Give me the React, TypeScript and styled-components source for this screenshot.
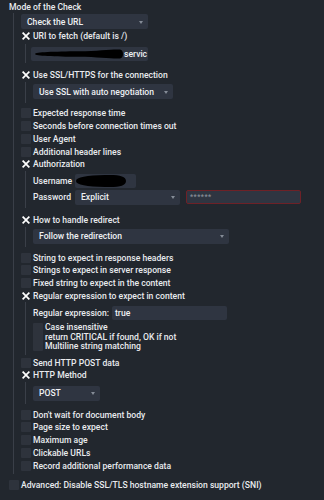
import React from "react";
import styled, { createGlobalStyle } from "styled-components";

const GlobalStyle = createGlobalStyle`
  html, body { margin: 0; padding: 0; background: #22272e; }
  body { font-family: Roboto, "Liberation Sans", sans-serif; }
`;

const Page = styled.div`
  width: 324px;
  height: 500px;
  background: #22272e;
  color: #e9ebee;
  font-size: 8.6px;
  font-weight: 500;
  overflow: hidden;
  box-sizing: border-box;
`;

const Header = styled.div`
  height: 13px;
  display: flex;
  align-items: center;
  padding-left: 9px;
  font-weight: 500;
`;

const Group = styled.div`
  margin-left: 13px;
  border-left: 1px solid #3a3f48;
  padding-left: 7px;
  padding-bottom: 1.6px;
  display: flex;
  flex-direction: column;
`;

const Nested = styled.div<{ $pt: number; $pb: number; $mt?: number; $gap?: number }>`
  margin-left: 4px;
  border-left: 1px solid #3a3f48;
  padding-left: 7px;
  padding-top: ${(p) => p.$pt}px;
  padding-bottom: ${(p) => p.$pb}px;
  margin-top: ${(p) => p.$mt ?? 0}px;
  display: flex;
  flex-direction: column;
  align-items: flex-start;
  gap: ${(p) => p.$gap ?? 0}px;
`;

const Row = styled.div<{ $mt?: number; $pl?: number }>`
  height: 12.75px;
  display: flex;
  align-items: center;
  gap: 2px;
  margin-top: ${(p) => p.$mt ?? 0}px;
  padding-left: ${(p) => p.$pl ?? 0}px;
  white-space: nowrap;
`;

const BoxEl = styled.span<{ $h?: number }>`
  width: 10px;
  height: ${(p) => p.$h ?? 10}px;
  flex: none;
  background: #2e333c;
  border-radius: 1px;
  display: flex;
  align-items: center;
  justify-content: center;
`;

const Check = ({ on, h }: { on?: boolean; h?: number }) => (
  <BoxEl $h={h} style={on ? { background: "transparent" } : undefined}>
    {on && (
      <svg width="8" height="8" viewBox="0 0 8 8">
        <path d="M1.2 1.2 L6.8 6.8 M6.8 1.2 L1.2 6.8" stroke="#ffffff" strokeWidth="1.7" strokeLinecap="square" />
      </svg>
    )}
  </BoxEl>
);

const SelectBox = styled.div<{ $w: number; $mt?: number }>`
  width: ${(p) => p.$w}px;
  height: 15px;
  margin-top: ${(p) => p.$mt ?? 0}px;
  flex: none;
  box-sizing: border-box;
  background: #2f3541;
  border-radius: 2px;
  display: flex;
  align-items: center;
  justify-content: space-between;
  padding: 0 5px 0 6px;
  color: #eef0f3;
  white-space: nowrap;
`;

const Arrow = styled.span`
  width: 0;
  height: 0;
  border-left: 2.5px solid transparent;
  border-right: 2.5px solid transparent;
  border-top: 3px solid #858c97;
  margin-top: 1px;
`;

const Select = ({ w, children, mt }: { w: number; children: React.ReactNode; mt?: number }) => (
  <SelectBox $w={w} $mt={mt}>
    <span>{children}</span>
    <Arrow />
  </SelectBox>
);

const InputBox = styled.div<{ $w: number; $ml?: number; $danger?: boolean }>`
  width: ${(p) => p.$w}px;
  height: 14px;
  flex: none;
  box-sizing: border-box;
  margin-left: ${(p) => p.$ml ?? 0}px;
  background: #2f3541;
  border-radius: 2px;
  border: ${(p) => (p.$danger ? "1px solid #6e2127" : "none")};
  display: flex;
  align-items: center;
  padding-left: 3px;
  color: #eef0f3;
  white-space: nowrap;
  overflow: hidden;
`;

const Placeholder = styled.span`
  color: #8a9099;
  font-size: 7px;
  letter-spacing: 0.5px;
`;

const FieldLine = styled.div<{ $h: number }>`
  height: ${(p) => p.$h}px;
  display: flex;
  align-items: center;
  white-space: nowrap;
`;

const Label = styled.span<{ $w: number }>`
  width: ${(p) => p.$w}px;
  flex: none;
`;

const MultiWrap = styled.div`
  display: flex;
  gap: 2px;
  margin-top: 3px;
`;

const MultiText = styled.div`
  line-height: 9.5px;
  padding-top: 0.5px;
  white-space: nowrap;
`;

const Blob = ({ w, h, d }: { w: number; h: number; d: string }) => (
  <svg width={w} height={h} viewBox={`0 0 ${w} ${h}`} style={{ flex: "none", display: "block" }}>
    <path d={d} fill="#000" />
  </svg>
);

export default function App() {
  return (
    <Page>
      <GlobalStyle />
      <Header>Mode of the Check</Header>
      <Group>
        <Select w={127} mt={1}>Check the URL</Select>
        <Row $mt={1}><Check on />URI to fetch (default is /)</Row>
        <Nested $pt={3} $pb={2} $mt={1.25}>
          <InputBox $w={117} $ml={-2}>
            <Blob w={90} h={12} d="M1 6 C 1 4, 20 3.5, 45 3.2 C 65 3, 78 1, 86 1.5 C 90 2, 90 10, 86 10.5 C 78 11, 65 9, 45 8.8 C 20 8.6, 1 8, 1 6 Z" />
            servic
          </InputBox>
        </Nested>
        <Row $mt={6}><Check on />Use SSL/HTTPS for the connection</Row>
        <Nested $pt={2} $pb={4} $mt={0.25}>
          <Select w={140}>Use SSL with auto negotiation</Select>
        </Nested>
        <Row $mt={4}><Check />Expected response time</Row>
        <Row><Check />Seconds before connection times out</Row>
        <Row><Check />User Agent</Row>
        <Row><Check />Additional header lines</Row>
        <Row><Check on />Authorization</Row>
        <Nested $pt={3} $pb={3} $gap={2}>
          <FieldLine $h={14}>
            <Label $w={42}>Username</Label>
            <InputBox $w={61} style={{ paddingLeft: 0 }}>
              <Blob w={52} h={14} d="M1 7 C 1 3, 12 1.5, 30 1 C 44 0.5, 51 2, 51 7 C 51 12, 44 13.5, 30 13 C 12 12.5, 1 11, 1 7 Z" />
            </InputBox>
          </FieldLine>
          <FieldLine $h={15}>
            <Label $w={42}>Password</Label>
            <Select w={105}>Explicit</Select>
            <InputBox $w={115} $ml={6} $danger>
              <Placeholder>******</Placeholder>
            </InputBox>
          </FieldLine>
        </Nested>
        <Row $mt={5.6}><Check on />How to handle redirect</Row>
        <Nested $pt={2} $pb={3} $mt={0.65}>
          <Select w={196}>Follow the redirection</Select>
        </Nested>
        <Row $mt={4.6}><Check />String to expect in response headers</Row>
        <Row><Check />Strings to expect in server response</Row>
        <Row><Check />Fixed string to expect in the content</Row>
        <Row><Check on />Regular expression to expect in content</Row>
        <Nested $pt={3.4} $pb={3}>
          <FieldLine $h={14}>
            <Label $w={79}>Regular expression:</Label>
            <InputBox $w={115}>true</InputBox>
          </FieldLine>
          <MultiWrap>
            <Check h={28} />
            <MultiText>
              Case insensitive
              <br />
              return CRITICAL if found, OK if not
              <br />
              Multiline string matching
            </MultiText>
          </MultiWrap>
        </Nested>
        <Row $mt={1.6}><Check />Send HTTP POST data</Row>
        <Row><Check on />HTTP Method</Row>
        <Nested $pt={3.9} $pb={3}>
          <Select w={67}>POST</Select>
        </Nested>
        <Row $mt={4.6}><Check />Don't wait for document body</Row>
        <Row><Check />Page size to expect</Row>
        <Row><Check />Maximum age</Row>
        <Row><Check />Clickable URLs</Row>
        <Row><Check />Record additional performance data</Row>
      </Group>
      <Row $mt={4.6} $pl={9}><Check />Advanced: Disable SSL/TLS hostname extension support (SNI)</Row>
    </Page>
  );
}
